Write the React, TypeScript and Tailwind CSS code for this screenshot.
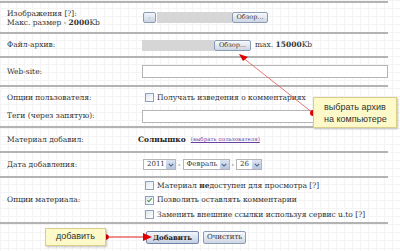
import React from 'react';

const serif = { fontFamily: '"DejaVu Serif", Georgia, serif' };
const sans = { fontFamily: '"Liberation Sans", Arial, sans-serif' };

function Row({
  label,
  height,
  children,
}: {
  label: React.ReactNode;
  height: string;
  children?: React.ReactNode;
}) {
  return (
    <div className={`flex border-t-2 border-[#b3b3b3] ${height}`}>
      <div className="flex w-[137px] shrink-0 items-center pl-[7px]">{label}</div>
      <div className="flex min-w-0 flex-1 items-center">{children}</div>
    </div>
  );
}

function BrowseButton({ className = '' }: { className?: string }) {
  return (
    <button
      className={`flex h-[11px] items-center justify-center rounded-[2px] border border-[#8b9bb3] bg-gradient-to-b from-[#f7f9fc] to-[#cdd6e4] text-[6.5px] leading-none text-[#333] ${className}`}
    >
      Обзор...
    </button>
  );
}

function Checkbox({ checked = false }: { checked?: boolean }) {
  return (
    <span className="mr-[3px] flex h-[9px] w-[9px] shrink-0 items-center justify-center border border-[#8fa3bd] bg-gradient-to-br from-[#dfe6ee] to-[#ffffff]">
      {checked && (
        <svg viewBox="0 0 10 10" className="h-[8px] w-[8px]">
          <path d="M2 5.2 L4.2 7.5 L8.2 2.5" fill="none" stroke="#3c9a3c" strokeWidth="1.6" />
        </svg>
      )}
    </span>
  );
}

function Select({ value, width }: { value: string; width: string }) {
  return (
    <span
      className={`flex h-[11px] items-center justify-between border border-[#b5b5b5] bg-white pl-[3px] text-[7px] leading-none text-[#333] ${width}`}
    >
      {value}
      <span className="flex h-[9px] w-[9px] items-center justify-center bg-gradient-to-b from-[#dbe4f2] to-[#b6c6de]">
        <svg viewBox="0 0 8 8" className="h-[6px] w-[6px]">
          <path d="M1 2.5 L4 5.5 L7 2.5" fill="none" stroke="#4d6185" strokeWidth="1.4" />
        </svg>
      </span>
    </span>
  );
}

export default function App() {
  return (
    <div
      className="relative h-[251px] w-[400px] overflow-hidden bg-white bg-[linear-gradient(to_right,#f4f4f4_1px,transparent_1px),linear-gradient(to_bottom,#f4f4f4_1px,transparent_1px)] bg-[size:8px_8px] text-[7.5px] text-[#333]"
      style={serif}
    >
      <div className="w-[388px] pt-[1px]">
        <Row
          height="h-[31px]"
          label={
            <div className="leading-[9px]">
              <div>Изображения [?]:</div>
              <div>
                Макс. размер - <b>2000</b>Kb
              </div>
            </div>
          }
        >
          <div className="ml-[6px] flex items-center">
            <button className="mr-[1px] flex h-[11px] w-[13px] items-center justify-center rounded-[2px] border border-[#8b9bb3] bg-gradient-to-b from-[#f3f6fb] to-[#c9d3e3] text-[6px] leading-none text-[#333]">
              ·
            </button>
            <span className="h-[11px] w-[75px] bg-[#d6d6d6]" />
            <BrowseButton className="w-[36px]" />
          </div>
        </Row>
        <Row height="h-[24px]" label="Файл-архив:">
          <div className="ml-[5px] flex items-center">
            <span className="h-[11px] w-[72px] bg-[#d6d6d6]" />
            <BrowseButton className="w-[37px]" />
            <span className="ml-[4px]">
              max. <b>15000</b>Kb
            </span>
          </div>
        </Row>
        <Row height="h-[29px]" label="Web-site:">
          <span className="ml-[5px] h-[13px] flex-1 border border-[#b5b5b5] bg-white" />
        </Row>
        <div className="flex h-[41px] flex-col border-t-2 border-[#b3b3b3]">
          <div className="flex h-[21px] items-center">
            <div className="w-[137px] shrink-0 pl-[7px]">Опции пользователя:</div>
            <div className="ml-[8px] flex items-center">
              <Checkbox />
              Получать изведения о комментариях
            </div>
          </div>
          <div className="flex h-[16px] items-center">
            <div className="w-[137px] shrink-0 pl-[7px]">Теги (через запятую):</div>
            <span className="ml-[5px] h-[13px] flex-1 border border-[#b5b5b5] bg-white" />
          </div>
        </div>
        <Row height="h-[25px]" label="Материал добавил:">
          <b className="ml-[1px] text-[7.5px] text-[#222]">Солнышко</b>
          <span className="ml-[5px] text-[5.5px] text-[#6b3fa8] underline">
            (выбрать пользователя)
          </span>
        </Row>
        <Row height="h-[25px]" label="Дата добавления:">
          <div className="ml-[6px] flex items-center gap-[2px]">
            <Select value="2011" width="w-[33px]" />
            <span>-</span>
            <Select value="Февраль" width="w-[47px]" />
            <span>-</span>
            <Select value="26" width="w-[26px]" />
          </div>
        </Row>
        <Row height="h-[46px]" label="Опции материала:">
          <div className="ml-[8px] flex flex-col gap-[3px]">
            <div className="flex items-center">
              <Checkbox />
              <span>
                Материал <b>не</b>доступен для просмотра [?]
              </span>
            </div>
            <div className="flex items-center">
              <Checkbox checked />
              Позволить оставлять комментарии
            </div>
            <div className="flex items-center">
              <Checkbox />
              Заменить внешние ссылки используя сервис u.to [?]
            </div>
          </div>
        </Row>
        <div className="flex h-[28px] items-center border-t-2 border-[#b3b3b3] pl-[146px]">
          <button className="flex h-[13px] w-[53px] items-center justify-center rounded-[2px] border border-[#6f84a6] bg-gradient-to-b from-[#f3f6fb] to-[#c3cfe2] text-[7px] font-bold leading-none text-[#222]">
            Добавить
          </button>
          <button className="ml-[4px] flex h-[13px] w-[43px] items-center justify-center rounded-[2px] border border-[#8b9bb3] bg-gradient-to-b from-[#f7f9fc] to-[#cdd6e4] text-[7px] leading-none text-[#333]">
            Очистить
          </button>
        </div>
      </div>

      <svg className="pointer-events-none absolute inset-0 h-[251px] w-[400px]" viewBox="0 0 400 251">
        <line x1="313" y1="113" x2="242" y2="57" stroke="#e25555" strokeWidth="0.8" />
        <polygon points="239,54 248,57 243,61" fill="#e00000" />
        <circle cx="313" cy="113" r="3" fill="#e00000" />
        <line x1="106" y1="237" x2="146" y2="237" stroke="#e00000" strokeWidth="0.9" />
        <polygon points="152,237 143,233 143,241" fill="#e00000" />
        <circle cx="106" cy="237" r="2.8" fill="#e00000" />
      </svg>

      <div
        className="absolute left-[313px] top-[97px] flex h-[31px] w-[84px] flex-col justify-center border border-[#d9cf8a] bg-[#fdf9c8] pl-[10px] text-[9px] leading-[12px] text-[#333] shadow-[1px_1px_2px_rgba(0,0,0,0.25)]"
        style={sans}
      >
        <div>выбрать архив</div>
        <div>на компьютере</div>
      </div>
      <div
        className="absolute left-[45px] top-[228px] flex h-[18px] w-[61px] items-center justify-center border border-[#d9cf8a] bg-[#fdf9c8] text-[9px] text-[#333] shadow-[1px_1px_2px_rgba(0,0,0,0.25)]"
        style={sans}
      >
        добавить
      </div>
    </div>
  );
}
